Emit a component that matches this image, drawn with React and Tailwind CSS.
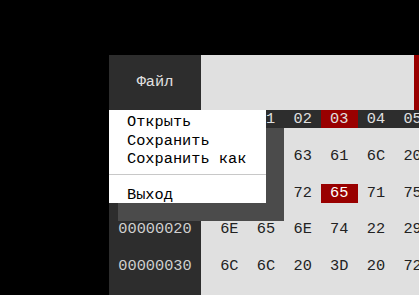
import React from 'react'

const mono = { fontFamily: '"Liberation Mono", "DejaVu Sans Mono", monospace' }

const rows = [
    { offset: '00000000', bytes: ['6C', '6F', '63', '61', '6C', '20', '66', '73', '20', '3D', '20', '72', '65', '71', '75', '69'] },
    { offset: '00000010', bytes: ['20', '3D', '72', '65', '71', '75', '69', '72', '65', '28', '22', '66', '73', '22', '29', '0A'] },
    { offset: '00000020', bytes: ['6E', '65', '6E', '74', '22', '29', '3B', '0A', '20', '20', '76', '61', '72', '20', '61', '20'] },
    { offset: '00000030', bytes: ['6C', '6C', '20', '3D', '20', '72', '65', '61', '64', '28', '29', '3B', '0A', '7D', '0A', '00'] },
]

const cols = ['00', '01', '02', '03', '04', '05', '06', '07', '08', '09', '0A', '0B', '0C', '0D', '0E', '0F']

function ContextMenu() {
    return (
        <div className="absolute left-[-9px] top-[55px] w-[166px] h-[93px] bg-white text-black pt-[3px] shadow-[18px_18px_0_#4b4b4b] z-10 leading-[18.5px] text-[15.3px]">
            <div className="pl-[27px]">Открыть</div>
            <div className="pl-[27px]">Сохранить</div>
            <div className="pl-[27px]">Сохранить как</div>
            <div className="mt-[5.5px] mb-[11px] h-px bg-[#c8c8c8]" />
            <div className="pl-[27px]">Выход</div>
        </div>
    )
}

export default function App() {
    return (
        <div className="w-[419px] h-[295px] bg-black overflow-hidden pl-[109px] pt-[55px]" style={mono}>
            <div className="relative h-[240px] w-[400px] overflow-hidden flex text-[15.3px]">
                {/* offsets column */}
                <div className="w-[92px] shrink-0 bg-[#2d2d2d] text-[#d0d0d0]">
                    <div className="h-[55px] flex items-center justify-center text-[#e0e0e0]">Файл</div>
                    <div className="h-[18px]" />
                    <div className="pt-[19px] flex flex-col gap-[17.67px]">
                        {rows.map(r => (
                            <div key={r.offset} className="h-[19px] flex items-center justify-center">{r.offset}</div>
                        ))}
                    </div>
                </div>

                {/* hex area */}
                <div className="flex-1 bg-[#e0e0e0]">
                    <div className="h-[55px] flex">
                        <div className="w-[213px] shrink-0" />
                        <div className="w-[20px] bg-[#990000]" />
                    </div>
                    <div className="h-[18px] bg-[#2d2d2d] pl-[10px] flex text-[#e0e0e0]">
                        {cols.map(c => (
                            <div key={c} className={`w-[36.67px] shrink-0 flex items-center justify-center ${c === '03' ? 'bg-[#990000]' : ''}`}>{c}</div>
                        ))}
                    </div>
                    <div className="pt-[19px] flex flex-col gap-[17.67px] text-[#222]">
                        {rows.map((r, ri) => (
                            <div key={r.offset} className="h-[19px] pl-[10px] flex">
                                {r.bytes.map((b, bi) => (
                                    <div key={bi} className={`w-[36.67px] shrink-0 flex items-center justify-center ${ri === 1 && bi === 3 ? 'bg-[#990000] text-white' : ''}`}>{b}</div>
                                ))}
                            </div>
                        ))}
                    </div>
                </div>

                <ContextMenu />
            </div>
        </div>
    )
}
